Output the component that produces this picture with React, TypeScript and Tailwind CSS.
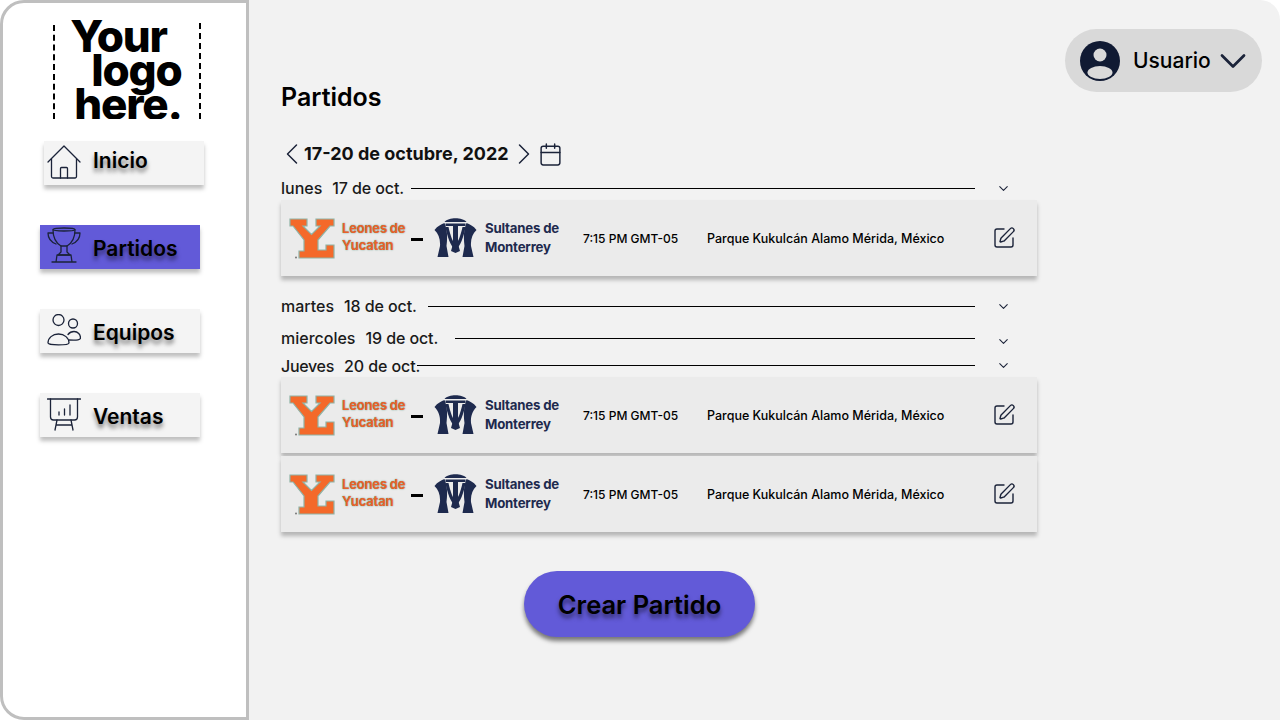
import { Calendar, ChevronDown, ChevronLeft, ChevronRight, SquarePen } from "lucide-react";

const navShadow = "shadow-[0_4px_4px_rgba(0,0,0,0.25)]";
const ink = "#1b2339";

function HouseIcon() {
  return (
    <svg width="34" height="36" viewBox="0 0 34 36" fill="none" stroke={ink} strokeWidth="1.3" strokeLinecap="round" strokeLinejoin="round">
      <path d="M1 17 17 1l16 16" />
      <path d="M4.500 14v17.500a1.500 1.500 0 0 0 1.500 1.500h22a1.500 1.500 0 0 0 1.500-1.500V14" />
      <path d="M13.500 33V23.500a1 1 0 0 1 1-1h5a1 1 0 0 1 1 1V33" />
    </svg>
  );
}

function TrophyIcon() {
  return (
    <svg width="34" height="38" viewBox="0 0 34 38" fill="none" stroke={ink} strokeWidth="1.3" strokeLinecap="round" strokeLinejoin="round">
      <ellipse cx="17" cy="2.500" rx="11" ry="1.500" />
      <path d="M6 3c0 8 3 13 8 16h6c5-3 8-8 8-16" />
      <path d="M6 6H1c0 6 3 9 8 11M28 6h5c0 6-3 9-8 11" />
      <path d="M14 19v6l-3 3h12l-3-3v-6" />
      <path d="M10 28h14l1 7H9l1-7ZM5 35h24" />
    </svg>
  );
}

function UsersIcon() {
  return (
    <svg width="34" height="33" viewBox="0 0 34 33" fill="none" stroke={ink} strokeWidth="1.3" strokeLinecap="round" strokeLinejoin="round">
      <circle cx="11.500" cy="6" r="5.500" />
      <circle cx="26" cy="9.500" r="4.500" />
      <path d="M1 29c0-5 4.500-9 10.500-9s10.500 4 10.500 9c0 2.500-21 2.500-21 0Z" />
      <path d="M21 20.500c1.500-2 3.500-3 6-3 4 0 6.500 3 6.500 6.500 0 1.800-3 2.500-11.500 2" />
    </svg>
  );
}

function BoardIcon() {
  return (
    <svg width="34" height="33" viewBox="0 0 34 33" fill="none" stroke={ink} strokeWidth="1.3" strokeLinecap="round" strokeLinejoin="round">
      <path d="M0.500 1h33" />
      <path d="M3.500 1v18a3 3 0 0 0 3 3h21a3 3 0 0 0 3-3V1" />
      <path d="M12 17v-3M17.500 17v-6M23 17V7" />
      <path d="M10 22 8 32M24 22l2 10M9 27h16" />
    </svg>
  );
}

function LeonesLogo() {
  return (
    <svg width="46" height="41" viewBox="0 0 46 41" className="shrink-0">
      <path
        d="M1 1h17v7h-4l8.500 8.500L31 8h-4V1h18v7h-4L29 22v10h8v-5h8v13H10v-7h5V22L4 8H1Z"
        fill="#f4692a"
        stroke="#8fb3a6"
        strokeWidth="1.200"
      />
      <circle cx="7" cy="39.500" r="1" fill="#777" />
    </svg>
  );
}

function SultanesLogo() {
  return (
    <svg width="43" height="41" viewBox="0 0 42 41" fill="#1e2a4e" className="shrink-0">
      <path d="M10 4C14-1 28-1 32 4Z" />
      <path d="M11 5.500h20v2.500H11Z" />
      <path d="M0 12C3 8 7 6 10 5c3 7 3 15 2 23l2 11H3l2.500-11C6 21 4 16 0 12Z" />
      <path d="M42 12c-3-4-7-6-10-7-3 7-3 15-2 23l-2 11h11l-2.500-11C36 21 38 16 42 12Z" />
      <path d="M11 9c2 11 5 18 10 24 5-6 8-13 10-24h-3c-2 9-4 14-7 18-3-4-5-9-7-18Z" />
      <path d="M18.500 8h5v18l2 7-4.500 2-4.500-2 2-7Z" />
    </svg>
  );
}

function NavItem({ label, icon, active, offset, iconBox, labelBox }: { label: string; icon: React.ReactNode; active?: boolean; offset?: boolean; iconBox: string; labelBox: string }) {
  return (
    <a
      className={`flex h-[44px] w-[160px] items-center ${navShadow} ${active ? "bg-[#625ad8]" : "bg-[#f4f4f4]"} ${offset ? "ml-[41px] pl-[3px]" : "ml-[37px] pl-[7px]"}`}
    >
      <span className={`flex w-[34px] shrink-0 ${iconBox}`}>{icon}</span>
      <span className={`ml-[12px] text-[21px] font-semibold text-black [text-shadow:0_4px_4px_rgba(0,0,0,0.5)] ${labelBox}`}>{label}</span>
    </a>
  );
}

function DayRow({ day, date, lineStart, className, chevron, dayClass }: { day: string; date: string; lineStart: string; className: string; chevron?: string; dayClass?: string }) {
  return (
    <div className={`flex w-[730px] items-center text-[16px] font-medium text-[#1a1a1a] ${className}`}>
      <span className={`whitespace-nowrap ${dayClass ?? ""}`}>{day}</span>
      <span className="ml-[10px] whitespace-nowrap tracking-[-0.1px]">{date}</span>
      <span className={`h-px flex-1 bg-black ${lineStart}`} />
      <ChevronDown size={15} strokeWidth={1.700} color={ink} className={`ml-[21px] shrink-0 ${chevron ?? ""}`} />
    </div>
  );
}

function MatchCard({ className }: { className?: string }) {
  return (
    <div className={`flex h-[76px] w-[756px] items-center bg-[#ebebeb] pl-[8px] shadow-[0_4px_4px_rgba(0,0,0,0.25)] ${className ?? ""}`}>
      <LeonesLogo />
      <div className="-mt-[3px] ml-[7px] w-[69px] text-[13px] font-bold leading-[17px] tracking-[-0.2px] text-[#e8622a] [text-shadow:0_0_1.5px_#4f8f7f]">
        Leones de
        <br />
        Yucatan
      </div>
      <div className="mt-[2px] h-[3px] w-[12px] bg-black" />
      <div className="ml-[11px]">
        <SultanesLogo />
      </div>
      <div className="ml-[8px] w-[98px] text-[13.250px] font-bold leading-[19px] tracking-[-0.2px] text-[#1e2a4e]">
        Sultanes de
        <br />
        Monterrey
      </div>
      <div className="w-[124px] whitespace-nowrap pt-[2px] text-[12px] font-medium text-black">7:15 PM GMT-05</div>
      <div className="w-[285px] whitespace-nowrap pt-[2px] text-[12.500px] font-medium text-black">Parque Kukulcán Alamo Mérida, México</div>
      <SquarePen size={24} strokeWidth={1.400} color={ink} />
    </div>
  );
}

export default function App() {
  return (
    <div className="flex h-[720px] w-[1280px] overflow-hidden bg-white font-['Inter','Liberation_Sans',sans-serif]">
      {/* Sidebar */}
      <aside className="flex h-full w-[249px] shrink-0 flex-col rounded-l-[24px] border-[3px] border-[#bfbfbf] bg-white">
        <div className="ml-[50px] mt-[17px] flex h-[99px] w-[148px] justify-between overflow-hidden">
          <span className="mt-[5px] h-[94px] border-l-2 border-dashed border-black" />
          <div className="-mt-px text-[44px] font-extrabold leading-[34px] tracking-[-1.200px] text-black">
            <div className="-ml-[2px]">Your</div>
            <div className="ml-[19px]">logo</div>
            <div className="ml-[2px]">here.</div>
          </div>
          <span className="mt-[3px] h-[96px] border-l-2 border-dashed border-black" />
        </div>
        <nav className="mt-[22px] flex flex-col gap-[40px]">
          <NavItem label="Inicio" icon={<HouseIcon />} iconBox="-mt-[1px]" labelBox="pb-[4px]" offset />
          <NavItem label="Partidos" icon={<TrophyIcon />} iconBox="-mt-[3px]" labelBox="pt-[4px]" active />
          <NavItem label="Equipos" icon={<UsersIcon />} iconBox="-mt-[1px]" labelBox="pt-[4px]" />
          <NavItem label="Ventas" icon={<BoardIcon />} iconBox="-mt-[1px]" labelBox="pt-[4px]" />
        </nav>
      </aside>

      {/* Main */}
      <main className="flex flex-1 rounded-tr-[20px] bg-[#f2f2f2] pl-[32px]">
        <div className="w-[756px] pt-[80px]">
          <h1 className="h-[32px] pt-[1px] text-[25px] font-semibold leading-[32px] text-black">Partidos</h1>

          <div className="mt-[30px] flex h-[24px] items-center">
            <ChevronLeft size={36} strokeWidth={1} color={ink} className="-ml-[7px] shrink-0" />
            <span className="-ml-[6px] -mt-px whitespace-nowrap text-[18px] font-bold text-[#111]">17-20 de octubre, 2022</span>
            <ChevronRight size={36} strokeWidth={1} color={ink} className="-ml-[3px] shrink-0" />
            <Calendar size={25} strokeWidth={1.400} color={ink} className="-ml-[4px] shrink-0" />
          </div>

          <DayRow day="lunes" date="17 de oct." lineStart="ml-[7px]" className="mt-[10px] h-[24px]" />
          <MatchCard />
          <DayRow day="martes" date="18 de oct." lineStart="ml-[11px]" className="mt-[18px] h-[24px]" />
          <DayRow day="miercoles" date="19 de oct." lineStart="ml-[17px]" className="mt-[8px] h-[24px]" chevron="mt-[7px]" />
          <DayRow day="Jueves" date="20 de oct." lineStart="-ml-[3px]" className="mt-[4px] h-[23px]" dayClass="tracking-[-0.3px]" />
          <MatchCard />
          <MatchCard className="mt-[3px]" />

          <button className="ml-[243px] mt-[39px] h-[66px] w-[231px] rounded-[33px] bg-[#625ad8] pt-[3px] text-[25.500px] font-semibold text-black shadow-[0_4px_4px_rgba(0,0,0,0.5)] [text-shadow:0_4px_4px_rgba(0,0,0,0.5)]">
            Crear Partido
          </button>
        </div>

        <div className="ml-auto mr-[18px] mt-[29px] flex h-[63px] w-[197px] items-center rounded-[32px] bg-[#d9d9d9] pl-[15px]">
          <svg width="40" height="40" viewBox="0 0 40 40" className="shrink-0">
            <circle cx="20" cy="20" r="20" fill="#101a33" />
            <circle cx="20" cy="14" r="6.500" fill="#d9d9d9" />
            <ellipse cx="20" cy="31.500" rx="12.500" ry="6.500" fill="#d9d9d9" />
          </svg>
          <span className="ml-[13px] text-[21px] font-medium text-black">Usuario</span>
          <ChevronDown size={44} strokeWidth={1.500} color={ink} className="shrink-0" />
        </div>
      </main>
    </div>
  );
}
